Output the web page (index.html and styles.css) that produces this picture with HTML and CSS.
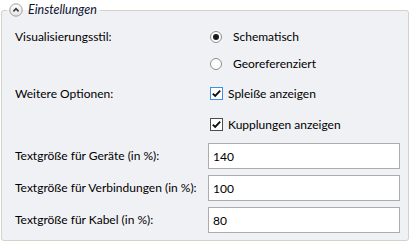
FILE: index.html
```html
<!DOCTYPE html>
<html lang="de">
<head>
<meta charset="utf-8">
<title>Einstellungen</title>
<link rel="stylesheet" href="styles.css">
</head>
<body>
<fieldset class="group">
  <legend class="group-title">
    <span class="chev">
      <svg width="14" height="14" viewBox="0 0 14 14">
        <defs>
          <linearGradient id="g" x1="0" y1="0" x2="0" y2="1">
            <stop offset="0" stop-color="#ffffff"/>
            <stop offset="1" stop-color="#e4e4e4"/>
          </linearGradient>
        </defs>
        <circle cx="7" cy="7" r="6.2" fill="url(#g)" stroke="#9c9c9c" stroke-width="1"/>
        <path d="M4.4 8.3 L7 5.7 L9.6 8.3" fill="none" stroke="#3a3a3a" stroke-width="1.7"/>
      </svg>
    </span>
    <span class="title-text">Einstellungen</span>
  </legend>
  <div class="form">
    <div class="label">Visualisierungsstil:</div>
    <div class="ctrl"><span class="radio checked"></span><span class="opt-r">Schematisch</span></div>

    <div class="label"></div>
    <div class="ctrl"><span class="radio"></span><span class="opt-r">Georeferenziert</span></div>

    <div class="label">Weitere Optionen:</div>
    <div class="ctrl"><span class="check focus"><svg width="11" height="11" viewBox="0 0 11 11"><path d="M1.8 5.6 L4.2 8 L9.2 2.6" fill="none" stroke="#111" stroke-width="1.9"/></svg></span><span class="opt-c">Spleiße anzeigen</span></div>

    <div class="label"></div>
    <div class="ctrl"><span class="check"><svg width="11" height="11" viewBox="0 0 11 11"><path d="M1.8 5.6 L4.2 8 L9.2 2.6" fill="none" stroke="#111" stroke-width="1.9"/></svg></span><span class="opt-c">Kupplungen anzeigen</span></div>

    <div class="label">Textgröße für Geräte (in %):</div>
    <div class="ctrl"><div class="input">140</div></div>

    <div class="label">Textgröße für Verbindungen (in %):</div>
    <div class="ctrl"><div class="input">100</div></div>

    <div class="label">Textgröße für Kabel (in %):</div>
    <div class="ctrl"><div class="input">80</div></div>
  </div>
</fieldset>
</body>
</html>
```

FILE: styles.css
```css
html, body {
  margin: 0;
  padding: 0;
  background: #ffffff;
}
body {
  font-family: Lato, "Noto Sans", sans-serif;
  font-size: 12px;
  color: #000;
}
.group {
  margin: 2px 1px 0 1px;
  padding: 6px 8px 4px 13px;
  border: 1px solid #d3d3c7;
  border-radius: 3px;
  background: #f0f1f5;
  min-inline-size: 0;
}
.group-title {
  display: flex;
  align-items: center;
  gap: 5px;
  padding: 0 3px 0 2px;
  margin-left: -8px;
  height: 16px;
}
.chev {
  display: block;
  width: 14px;
  height: 14px;
}
.chev svg { display: block; }
.title-text {
  font-style: italic;
  font-size: 12.5px;
  color: #0e1330;
  line-height: 16px;
}
.form {
  display: grid;
  grid-template-columns: 193px 192px;
  grid-template-rows: 25px 29px 31px 31px 32px 32px 32px;
  align-items: center;
}
.label {
  line-height: 16px;
  white-space: nowrap;
}
.ctrl {
  display: flex;
  align-items: center;
}
.radio {
  width: 12px;
  height: 12px;
  box-sizing: border-box;
  border: 1px solid #8e8e8e;
  border-radius: 50%;
  background: #fdfdfd;
  margin-left: 2px;
  display: flex;
  align-items: center;
  justify-content: center;
}
.radio.checked::after {
  content: "";
  width: 6px;
  height: 6px;
  border-radius: 50%;
  background: #1a1a1a;
}
.opt-r { margin-left: 11px; }
.check {
  width: 13px;
  height: 13px;
  box-sizing: border-box;
  border: 1px solid #4d4d4d;
  background: #fff;
  margin-left: 2px;
  display: flex;
  align-items: center;
  justify-content: center;
}
.check svg { display: block; }
.check.focus { border-color: #3d8ee8; }
.opt-c { margin-left: 5px; }
.input {
  width: 192px;
  height: 26px;
  box-sizing: border-box;
  border: 1px solid #acacac;
  background: #fff;
  padding: 0 4px;
  display: flex;
  align-items: center;
}
```
